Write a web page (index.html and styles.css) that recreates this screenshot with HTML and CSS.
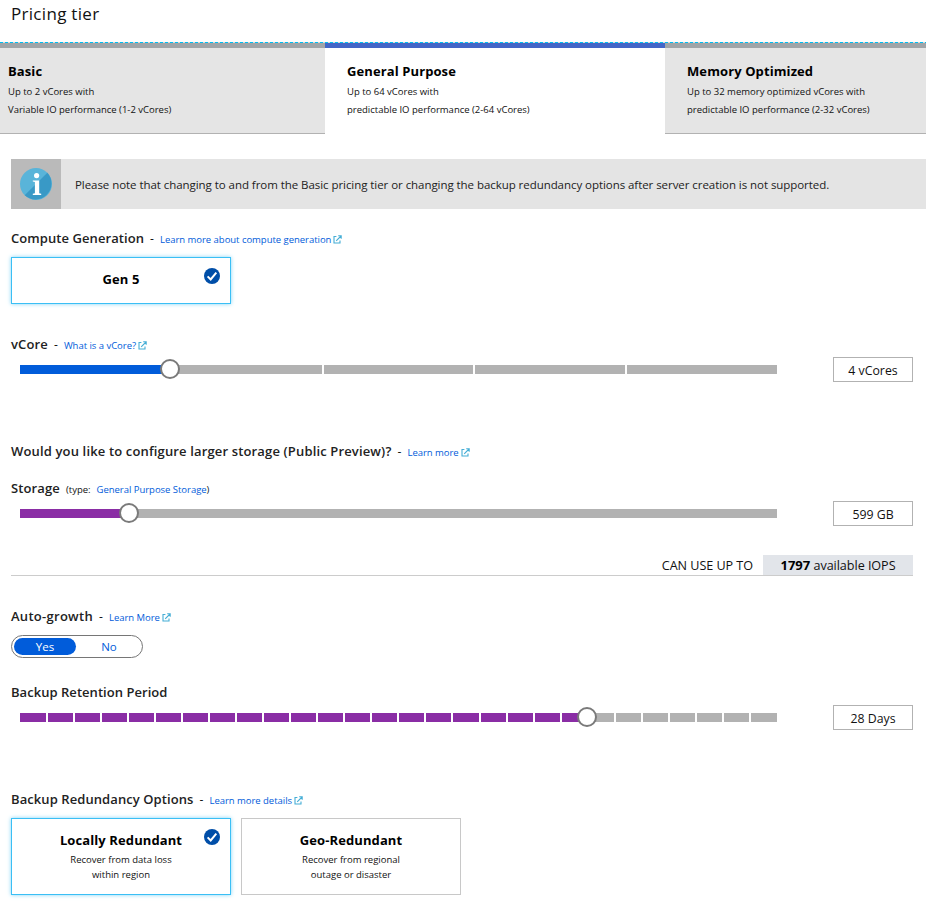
FILE: index.html
```
<!DOCTYPE html>
<html lang="en">
<head>
<meta charset="utf-8">
<title>Pricing tier</title>
<link rel="stylesheet" href="styles.css">
</head>
<body>
<svg width="0" height="0" class="defs" aria-hidden="true">
  <symbol id="ext" viewBox="0 0 9 9"><path d="M3.4 1.5H1V8h6V5.4M3.2 5.8 8 1M5.2.8h3v3" fill="none" stroke="#45aed6" stroke-width="1.1"/></symbol>
  <symbol id="check" viewBox="0 0 16 16"><circle cx="8" cy="8" r="8" fill="#004ea8"/><path d="M3.6 8.4 6.7 11.5 12.3 4.7" fill="none" stroke="#fff" stroke-width="2"/></symbol>
</svg>
<h1 class="title">Pricing tier</h1>
<nav class="tabs">
  <div class="tab"><b>Basic</b><p>Up to 2 vCores with</p><p>Variable IO performance (1-2 vCores)</p></div>
  <div class="tab active"><b>General Purpose</b><p>Up to 64 vCores with</p><p>predictable IO performance (2-64 vCores)</p></div>
  <div class="tab"><b>Memory Optimized</b><p>Up to 32 memory optimized vCores with</p><p>predictable IO performance (2-32 vCores)</p></div>
</nav>
<main>
  <div class="notice">
    <div class="notice-icon">
      <svg width="32" height="32" viewBox="0 0 32 32"><circle cx="16" cy="16" r="16" fill="#59b4d9"/><path d="M27.3 4.7A16 16 0 0 1 4.7 27.3Z" fill="#3999c6"/><circle cx="16.6" cy="7.6" r="2.6" fill="#fff"/><path d="M12.8 12.4h6.4v12.9l2 .5v1.2h-8.4v-1.2l2.1-.5V14l-2.1-.4z" fill="#fff"/></svg>
    </div>
    <span>Please note that changing to and from the Basic pricing tier or changing the backup redundancy options after server creation is not supported.</span>
  </div>

  <section class="compute">
    <h2>Compute Generation</h2><i>-</i><a>Learn more about compute generation<svg><use href="#ext"/></svg></a>
  </section>
  <div class="card selected gen"><b>Gen 5</b><svg class="check"><use href="#check"/></svg></div>

  <section class="vcore"><h2>vCore</h2><i>-</i><a>What is a vCore?<svg><use href="#ext"/></svg></a></section>
  <div class="slider-row">
    <div class="slider blue" style="--value:19.8%"><div class="track" id="vcores"></div><div class="handle"></div></div>
    <div class="value">4 vCores</div>
  </div>

  <section class="larger"><h2>Would you like to configure larger storage (Public Preview)?</h2><i>-</i><a>Learn more<svg><use href="#ext"/></svg></a></section>
  <section class="storage"><h2>Storage</h2><span class="type">(type:</span><a>General Purpose Storage</a><span class="close">)</span></section>
  <div class="slider-row">
    <div class="slider" style="--value:14.4%"><div class="track" id="gb"></div><div class="handle"></div></div>
    <div class="value">599 GB</div>
  </div>
  <div class="iops"><span>CAN USE UP TO</span><div><b>1797</b> available IOPS</div></div>

  <section class="growth"><h2>Auto-growth</h2><i>-</i><a>Learn More<svg><use href="#ext"/></svg></a></section>
  <div class="toggle"><span class="on">Yes</span><span>No</span></div>

  <section class="retention"><h2>Backup Retention Period</h2></section>
  <div class="slider-row">
    <div class="slider" style="--value:74.9%"><div class="track" id="days"></div><div class="handle"></div></div>
    <div class="value">28 Days</div>
  </div>

  <section class="redundancy"><h2>Backup Redundancy Options</h2><i>-</i><a>Learn more details<svg><use href="#ext"/></svg></a></section>
  <div class="cards">
    <div class="card selected"><b>Locally Redundant</b><p>Recover from data loss</p><p>within region</p><svg class="check"><use href="#check"/></svg></div>
    <div class="card"><b>Geo-Redundant</b><p>Recover from regional</p><p>outage or disaster</p></div>
  </div>
</main>
<script src="sliders.js"></script>
</body>
</html>
```
FILE: sliders.js
```
// Each track is divided into steps; steps below the handle are filled.
function build(id, steps, filled) {
  const track = document.getElementById(id);
  for (let n = 0; n < steps; n++) {
    const step = document.createElement("span");
    if (n < filled) step.className = "filled";
    track.append(step);
  }
}
build("vcores", 5, 1);
build("days", 28, 21);
```
FILE: styles.css
```
* { box-sizing: border-box; margin: 0; padding: 0; }
body { width: 926px; height: 904px; overflow: hidden; background: #fff; color: #111; font-family: "Open Sans", "Noto Sans", sans-serif; font-size: 9.5px; }
.defs { position: absolute; }
b { font-size: 13px; font-weight: 700; letter-spacing: .1px; color: #000; }
i { font-style: normal; font-size: 12px; }
a { color: #015cda; letter-spacing: -.03px; }
.title { height: 42px; padding-left: 11px; font-size: 17px; font-weight: 400; letter-spacing: .3px; line-height: 28px; }

.tabs { display: grid; grid-template-columns: 325px 340px 261px; height: 92px; position: relative; }
.tabs::before { content: ""; position: absolute; top: 0; left: 0; right: 0; height: 1px; background: repeating-linear-gradient(90deg, #00bcf2 0 3px, #e0d8d0 3px 5px); }
.tab { background: #e5e5e5; border-top: 6px solid #a0a5a8; border-bottom: 1px solid #b2b2b2; padding: 14px 0 0 8px; line-height: 18px; }
.tab + .tab { padding-left: 22px; }
.tab.active { background: #fff; border-top-color: #4366c8; border-bottom-color: #fff; }
.tab b { display: block; margin-bottom: 3px; }

main { padding: 25px 0 0 11px; }
.notice { display: flex; align-items: center; height: 50px; background: #e4e4e4; color: #222; font-size: 11.5px; letter-spacing: -.055px; white-space: nowrap; }
.notice-icon { display: grid; place-items: center; width: 50px; height: 50px; margin-right: 14px; background: #bababa; }

section { display: flex; align-items: baseline; line-height: 20px; height: 20px; white-space: nowrap; }
section h2 { font-size: 13px; font-weight: 600; letter-spacing: .13px; color: #222; }
section i { width: 4px; margin: 0 6px; }
section a svg { width: 9px; height: 9px; margin-left: 2px; vertical-align: -1px; }
.compute { margin-top: 19px; }
.vcore { margin-top: 30px; }
.larger { margin-top: 59px; }
.larger h2 { letter-spacing: .15px; }
.storage { margin-top: 17px; }
.growth { margin-top: 30px; }
.growth h2 { letter-spacing: .28px; }
.retention { margin-top: 24px; }
.retention h2 { letter-spacing: .04px; }
.compute h2 { letter-spacing: .07px; }
.redundancy { margin-top: 59px; }
.redundancy h2 { letter-spacing: .08px; }
.type { margin: 0 6px; }

.card { position: relative; width: 220px; height: 77px; border: 1px solid #c8c8c8; text-align: center; }
.card.selected { border-color: #3abff5; box-shadow: 0 0 4px #7fd3f5; }
.card b { display: block; margin: 12px 0 3px; line-height: 18px; }
.card p { line-height: 15px; }
.gen { height: 47px; margin-top: 9px; }
.check { position: absolute; right: 10px; top: 10px; width: 16px; height: 16px; }
.cards { display: flex; gap: 10px; margin-top: 9px; }

.slider-row { display: flex; align-items: center; justify-content: space-between; width: 902px; height: 25px; margin-top: 3px; padding-left: 9px; }
.slider { position: relative; width: 757px; --fill: #8a2da5; }
.slider.blue { --fill: #015cda; }
.track { display: flex; gap: 2px; height: 9px; }
.track span { flex: 1; background: #b2b2b2; }
#days span:first-child, #days span:last-child { flex: 0 0 26px; }
.track .filled { background: var(--fill); }
#gb { background: linear-gradient(90deg, var(--fill) var(--value), #b2b2b2 var(--value)); }
.handle { position: absolute; left: var(--value); top: -6px; width: 20px; height: 20px; margin-left: -10px; border: 2px solid #7a7a7a; border-radius: 50%; background: #fff; }
.value { width: 80px; height: 25px; border: 1px solid #b2b2b2; font-size: 12.3px; line-height: 25px; text-align: center; }

.iops { display: flex; justify-content: flex-end; width: 902px; height: 21px; margin-top: 29px; border-bottom: 1px solid #ccc; font-size: 12.6px; line-height: 21px; letter-spacing: -.04px; }
.iops div { width: 150px; height: 20px; margin-left: 10px; background: #e2e5ea; text-align: center; }
.iops b { letter-spacing: 0; line-height: 1; }

.toggle { display: flex; width: 132px; height: 23px; margin-top: 9px; padding: 2px; border: 1px solid #767676; border-radius: 12px; font-size: 11.5px; color: #015cda; text-align: center; line-height: 17px; }
.toggle span { flex: 0 0 66px; }
.toggle .on { flex-basis: 62px; border-radius: 9px; background: #015cda; color: #fff; }
```
